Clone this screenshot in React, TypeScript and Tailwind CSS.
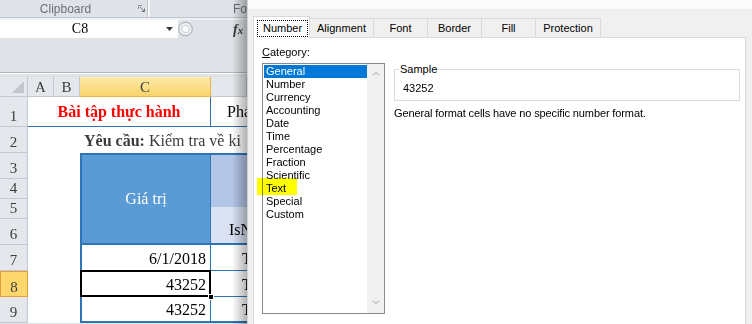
import React from 'react';

const CATEGORIES = [
  'General',
  'Number',
  'Currency',
  'Accounting',
  'Date',
  'Time',
  'Percentage',
  'Fraction',
  'Scientific',
  'Text',
  'Special',
  'Custom',
];

const TABS = [
  { label: 'Alignment', width: 'w-[65px]' },
  { label: 'Font', width: 'w-[55px]' },
  { label: 'Border', width: 'w-[55px]' },
  { label: 'Fill', width: 'w-[55px]' },
  { label: 'Protection', width: 'w-[66px]' },
];

const hdr =
  'flex items-center justify-center border-r border-b border-[#c5c9cf] bg-[#e4e7eb] text-[15px] text-[#3c3c3c]';
const rowHdr =
  'col-start-1 flex items-end justify-center border-r border-b border-[#c5c9cf] bg-[#e4e7eb] pb-[2px] text-[15px] leading-[16px] text-[#3c3c3c]';

function Sheet() {
  return (
    <div className="relative w-[247px] shrink-0 overflow-hidden bg-[#dfe2e7] font-['Liberation_Serif','Times_New_Roman',serif]">
      {/* ribbon group labels */}
      <div className="flex h-[17px] items-center font-['Liberation_Sans',Arial,sans-serif] text-[12px] text-[#6a717c]">
        <div className="flex w-[148px] items-center">
          <span className="w-[131px] text-center">Clipboard</span>
          <svg width="8" height="8" viewBox="0 0 8 8" className="ml-[7px]">
            <path d="M0.5 4V0.5H4" stroke="#8a9099" fill="none" />
            <path d="M2 2L6.5 6.5M6.5 3.5V6.5H3.5" stroke="#6f7680" fill="none" />
          </svg>
        </div>
        <div className="h-full w-[3px] border-l border-[#c3c8cf] bg-[#f4f6f8]" />
        <span className="pl-[83px]">Fo</span>
      </div>
      <div className="h-[3px] border-t border-[#bfc5cd] bg-[#eef0f3]" />

      {/* formula bar */}
      <div className="flex h-[18px] items-center">
        <div className="flex h-full w-[178px] items-center bg-white">
          <span className="w-[160px] text-center text-[14px] leading-[18px] text-black">C8</span>
          <svg width="7" height="4" viewBox="0 0 7 4" className="ml-[6px]">
            <path d="M0 0H7L3.5 4Z" fill="#3a3a3a" />
          </svg>
        </div>
        <svg width="15" height="16" viewBox="0 0 15 16">
          <circle cx="7.5" cy="8" r="6.8" fill="#eceef1" stroke="#a3a9b1" />
          <circle cx="7.5" cy="8" r="3.8" fill="#fbfbfb" stroke="#cdd1d6" />
        </svg>
        <span className="ml-[40px] text-[14px] font-bold italic text-[#3a3a3a]">
          f<span className="text-[11px]">x</span>
        </span>
      </div>
      <div className="h-[34px]" />
      <div className="h-px bg-[#b0b6be]" />
      <div className="h-px bg-white" />
      <div className="h-[3px]" />

      {/* cells */}
      <div className="grid grid-cols-[28px_26px_26px_131px_36px] grid-rows-[20px_30px_26px_26px_20px_20px_26px_26px_26px_26px] bg-white text-[16px] leading-[18px]">
        <div className="relative col-start-1 row-start-1 border-r border-b border-[#c5c9cf] bg-[#e4e7eb]">
          <svg width="12" height="12" viewBox="0 0 12 12" className="absolute right-[3px] bottom-[3px]">
            <path d="M12 0V12H0Z" fill="#c2c6cb" />
          </svg>
        </div>
        <div className={`col-start-2 row-start-1 ${hdr}`}>A</div>
        <div className={`col-start-3 row-start-1 ${hdr}`}>B</div>
        <div className="col-start-4 row-start-1 flex items-center justify-center border-r border-b border-[#eeb04a] bg-linear-to-b from-[#fdeaa8] to-[#f8d46a] text-[15px] text-[#3c3c3c]">
          C
        </div>
        <div className={`col-start-5 row-start-1 ${hdr}`} />

        <div className={`row-start-2 ${rowHdr}`}>1</div>
        <div className={`row-start-3 ${rowHdr}`}>2</div>
        <div className={`row-start-4 ${rowHdr}`}>3</div>
        <div className={`row-start-5 ${rowHdr}`}>4</div>
        <div className={`row-start-6 ${rowHdr}`}>5</div>
        <div className={`row-start-7 ${rowHdr}`}>6</div>
        <div className={`row-start-8 ${rowHdr}`}>7</div>
        <div className="col-start-1 row-start-9 flex items-end justify-center border border-[#e2a13c] bg-[#fdd76c] pb-[1px] text-[15px] leading-[16px] text-[#3c3c3c]">
          8
        </div>
        <div className={`row-start-10 ${rowHdr}`}>9</div>

        {/* row 1 */}
        <div className="col-span-3 col-start-2 row-start-2 flex items-center justify-center border-r border-b border-[#2f6fb5] font-bold text-[#ff0000]">
          Bài tập thực hành
        </div>
        <div className="col-start-5 row-start-2 flex items-center overflow-hidden border-b border-[#2f6fb5] pl-[16px] whitespace-nowrap text-black">
          Phá
        </div>

        {/* row 2 */}
        <div className="col-span-4 col-start-2 row-start-3 flex items-end overflow-hidden whitespace-nowrap pb-[3px] pl-[56px] text-[#3b3b3b]">
          <b>Yêu cầu:</b>&nbsp;Kiểm tra về ki
        </div>

        {/* table header */}
        <div className="col-start-4 row-span-4 row-start-4 flex items-center justify-center border-t-2 border-b-2 border-l-2 border-r border-[#2e75b6] bg-[#5b9bd5] text-white">
          Giá trị
        </div>
        <div className="col-start-5 row-span-4 row-start-4 flex flex-col border-t-2 border-b-2 border-[#2e75b6]">
          <div className="h-[52px] bg-[#b4c6e7]" />
          <div className="flex flex-1 items-end overflow-hidden whitespace-nowrap bg-[#d9e1f2] pb-[4px] pl-[18px] text-black">
            IsN
          </div>
        </div>

        {/* rows 7 - 9 */}
        <div className="col-start-4 row-start-8 flex items-end justify-end border-l-2 border-r border-b border-[#2e75b6] pr-[4px] pb-[2px] text-black">
          6/1/2018
        </div>
        <div className="relative col-start-4 row-start-9 flex items-end justify-end border-l-2 border-r border-b border-[#2e75b6] pr-[4px] pb-[2px] text-black">
          43252
          <div className="absolute -top-px -left-[2px] -right-px -bottom-px border-2 border-black" />
          <div className="absolute -right-[4px] -bottom-[4px] h-[6px] w-[6px] border border-white bg-black" />
        </div>
        <div className="col-start-4 row-start-10 flex items-end justify-end border-l-2 border-r border-b-2 border-[#2e75b6] pr-[4px] pb-[2px] text-black">
          43252
        </div>
        <div className="col-start-5 row-start-8 flex items-end border-b border-[#2e75b6] pb-[2px] pl-[31px] text-black">T</div>
        <div className="col-start-5 row-start-9 flex items-end border-b border-[#2e75b6] pb-[2px] pl-[31px] text-black">T</div>
        <div className="col-start-5 row-start-10 flex items-end border-b-2 border-[#2e75b6] pb-[2px] pl-[31px] text-black">T</div>
      </div>

      {/* dialog shadow on the sheet */}
      <div className="pointer-events-none absolute top-0 right-0 bottom-0 w-[15px] bg-linear-to-l from-black/30 to-transparent" />
    </div>
  );
}

function ListBox() {
  return (
    <div className="relative flex h-[251px] w-[123px] shrink-0 border border-[#86898f] bg-white">
      <div className="flex-1 pt-px pl-px">
        {CATEGORIES.map((c) => (
          <div
            key={c}
            className={
              c === 'General'
                ? 'h-[13px] bg-[#0078d7] pl-[2px] leading-[13px] text-white'
                : 'h-[13px] pl-[2px] leading-[13px] text-black'
            }>
            {c}
          </div>
        ))}
      </div>
      <div className="flex w-[17px] flex-col items-center justify-between bg-[#f0f0f0] pt-[7px] pb-[8px]">
        <svg width="8" height="5" viewBox="0 0 8 5">
          <path d="M1 4.2L4 1.2L7 4.2" stroke="#c2c2c2" strokeWidth="1.4" fill="none" />
        </svg>
        <svg width="8" height="5" viewBox="0 0 8 5">
          <path d="M1 0.8L4 3.8L7 0.8" stroke="#c2c2c2" strokeWidth="1.4" fill="none" />
        </svg>
      </div>

      {/* yellow marker over "Text" */}
      <div className="pointer-events-none absolute top-[114px] left-[-6px] h-[17px] w-[40px] bg-[#ffff00] mix-blend-multiply" />
    </div>
  );
}

function FormatDialog() {
  return (
    <div className="flex flex-1 flex-col border-l border-[#d2d2d2] bg-[#f0f0f0] font-['Liberation_Sans',Arial,sans-serif] text-[11px] text-black">
      <div className="h-[9px] shrink-0 bg-[#fbfbfb]" />
      <div className="h-[7px] shrink-0" />

      {/* TABS */}
      <div className="relative z-10 -mb-px flex h-[22px] shrink-0 items-end pl-[5px]">
        <div className="relative z-10 flex h-[22px] w-[57px] shrink-0 items-start border border-b-0 border-[#d9d9d9] bg-white pt-[3px] pl-[3px]">
          <span className="flex h-[17px] w-[51px] items-center justify-center border border-dotted border-black">
            Number
          </span>
        </div>
        {TABS.map((t) => (
          <div
            key={t.label}
            className={`-ml-px mb-px flex h-[19px] shrink-0 items-center justify-center border border-b-0 border-[#d9d9d9] bg-[#f0f0f0] ${t.width}`}>
            {t.label}
          </div>
        ))}
      </div>

      {/* TAB PANEL */}
      <div className="mr-[6px] ml-[5px] flex-1 border border-b-0 border-[#d9d9d9] bg-white pt-[8px] pl-[8px]">
        <div className="leading-[13px]">
          <span className="underline">C</span>ategory:
        </div>
        <div className="mt-[4px] flex gap-[9px]">
          <ListBox />
          <div className="flex flex-col pt-[6px]">
            <div className="relative h-[32px] w-[346px] border border-[#dcdcdc] pt-[12px] pl-[8px] leading-[13px]">
              <span className="absolute -top-[7px] left-[4px] bg-white px-px leading-[13px]">Sample</span>
              43252
            </div>
            <p className="mt-[6px] leading-[13px] tracking-[-0.12px]">
              General format cells have no specific number format.
            </p>
          </div>
        </div>
      </div>
    </div>
  );
}

export default function App() {
  return (
    <div className="flex h-[324px] w-[752px] overflow-hidden bg-white">
      <Sheet />
      <FormatDialog />
    </div>
  );
}
